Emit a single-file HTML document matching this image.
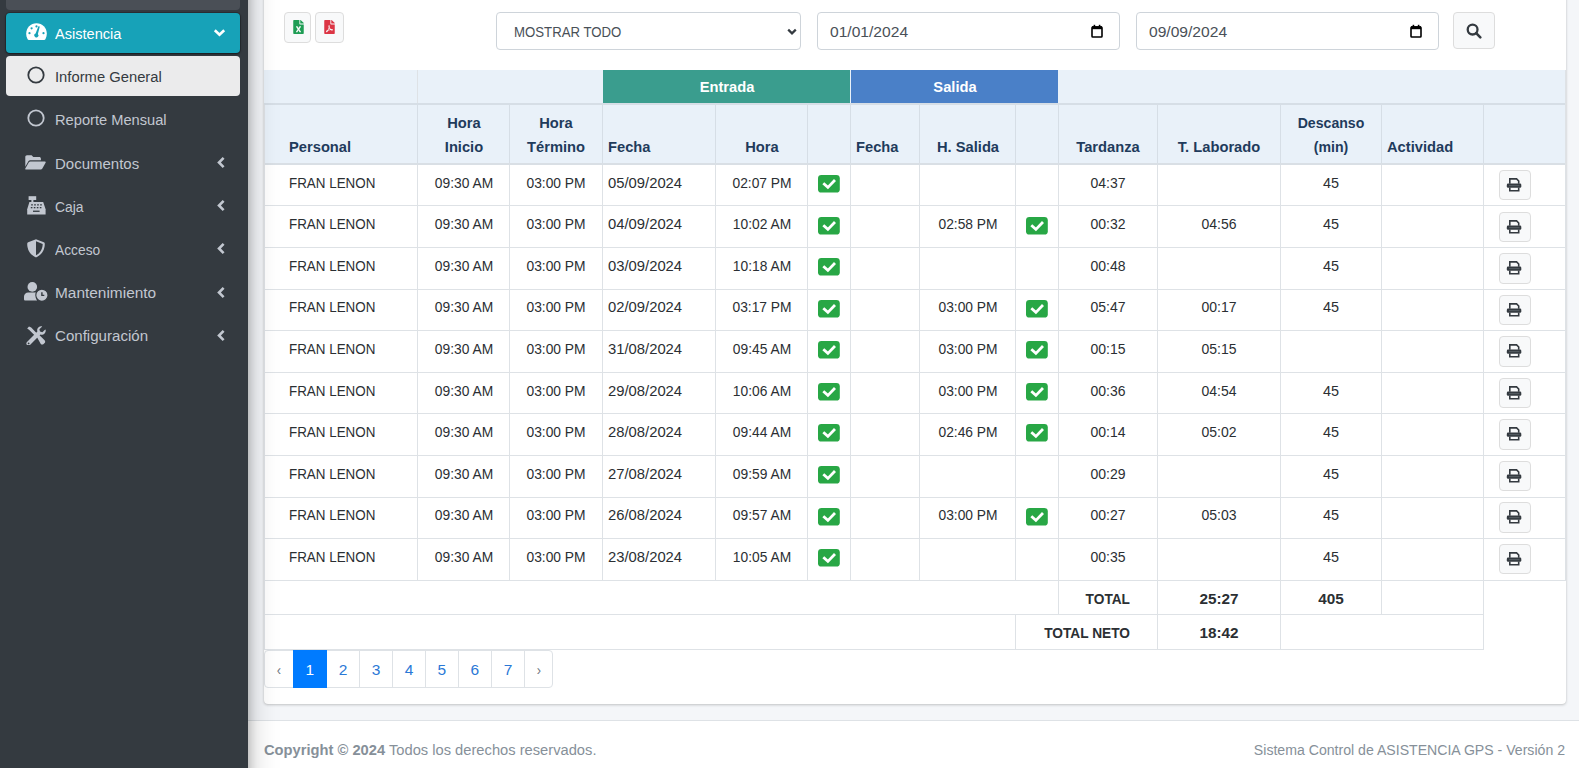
<!DOCTYPE html>
<html><head><meta charset="utf-8"><style>
html,body{margin:0;padding:0;}
body{width:1579px;height:768px;overflow:hidden;position:relative;background:#f4f6f9;font-family:"Liberation Sans", sans-serif;}
.t{position:absolute;white-space:nowrap;}
.r{position:absolute;}
</style></head><body>
<div class="r" style="left:248.00px;top:720.00px;width:1331.00px;height:80.00px;background:#fff;border-top:1px solid #dee2e6;"></div>
<div class="t" style="left:264.00px;top:741.93px;font-size:15.5px;line-height:15.5px;color:#869099;font-weight:normal;transform:scaleX(0.9484);transform-origin:left top;"><b>Copyright &copy; 2024</b> Todos los derechos reservados.</div>
<div class="t" style="left:965.00px;width:600px;text-align:right;top:741.93px;font-size:15.5px;line-height:15.5px;color:#869099;font-weight:normal;transform:scaleX(0.9097);transform-origin:right top;">Sistema Control de ASISTENCIA GPS - Versi&oacute;n 2</div>
<div class="r" style="left:264.00px;top:-20.00px;width:1302.00px;height:724.30px;background:#fff;border-radius:4px;box-shadow:0 0 1px rgba(0,0,0,.125),0 1px 3px rgba(0,0,0,.2);"></div>
<div class="r" style="left:284.20px;top:12.20px;width:27.30px;height:30.40px;box-sizing:border-box;background:#f8f9fa;border:1px solid #ddd;border-radius:4px;"><svg style="position:absolute;left:7.5px;top:6.5px" width="11" height="14" viewBox="0 0 384 512"><path fill="#1f9d55" d="M224 136V0H24C10.7 0 0 10.7 0 24v464c0 13.3 10.7 24 24 24h336c13.3 0 24-10.7 24-24V160H248c-13.2 0-24-10.8-24-24zm60.1 106.5L224 336l60.1 93.5c5.1 8-.6 18.5-10.1 18.5h-34.9c-4.4 0-8.5-2.4-10.6-6.3C208.9 405.5 192 373 192 373c-6.4 14.8-10 20-36.6 68.8-2.1 3.9-6.1 6.3-10.5 6.3H110c-9.5 0-15.2-10.5-10.1-18.5l60.3-93.5-60.3-93.5c-5.2-8 .6-18.5 10.1-18.5h34.8c4.4 0 8.5 2.4 10.6 6.3 26.1 48.8 20 33.6 36.6 68.5 0 0 6.1-11.7 36.6-68.5 2.1-3.9 6.2-6.3 10.6-6.3H274c9.5-.1 15.2 10.4 10.1 18.4zM384 121.9v6.1H256V0h6.1c6.4 0 12.5 2.5 17 7l97.9 98c4.5 4.5 7 10.6 7 16.9z"/></svg></div>
<div class="r" style="left:315.20px;top:12.20px;width:28.40px;height:30.40px;box-sizing:border-box;background:#f8f9fa;border:1px solid #ddd;border-radius:4px;"><svg style="position:absolute;left:8px;top:6.5px" width="11" height="14" viewBox="0 0 384 512"><path fill="#dc3545" d="M181.9 256.1c-5-16-4.9-46.9-2-46.9 8.4 0 7.6 36.9 2 46.9zm-1.7 47.2c-7.7 20.2-17.3 43.3-28.4 62.7 18.3-7 39-17.2 62.9-21.9-12.7-9.6-24.9-23.4-34.5-40.8zM86.1 428.1c0 .8 13.2-5.4 34.9-40.2-6.7 6.3-29.1 24.5-34.9 40.2zM248 160h136v328c0 13.3-10.7 24-24 24H24c-13.3 0-24-10.7-24-24V24C0 10.7 10.7 0 24 0h200v136c0 13.2 10.8 24 24 24zm-8 171.8c-20-12.2-33.3-29-42.7-53.8 4.5-18.5 11.6-46.6 6.2-64.2-4.7-29.4-42.4-26.5-47.8-6.8-5 18.3-.4 44.1 8.1 77-11.6 27.6-28.7 64.6-40.8 85.8-.1 0-.1.1-.2.1-27.1 13.9-73.6 44.5-54.5 68 5.6 6.9 16 10 21.5 10 17.9 0 35.7-18 61.1-61.8 25.8-8.5 54.1-19.1 79-23.2 21.7 11.8 47.1 19.5 64 19.5 29.2 0 31.2-32 19.7-43.4-13.9-13.6-54.3-9.7-73.6-7.2zM377 105L279 7c-4.5-4.5-10.6-7-17-7h-6v128h128v-6.1c0-6.3-2.5-12.4-7-16.9zm-74.1 255.3c4.1-2.7-2.5-11.9-42.8-9 37.1 15.8 42.8 9 42.8 9z"/></svg></div>
<div class="r" style="left:496.00px;top:12.3px;width:305.00px;height:37.5px;box-sizing:border-box;background:#fff;border:1px solid #ced4da;border-radius:4px;"></div>
<div class="t" style="left:513.50px;top:23.73px;font-size:15.5px;line-height:15.5px;color:#495057;font-weight:normal;transform:scaleX(0.8516);transform-origin:left top;">MOSTRAR TODO</div>
<svg class="r" style="left:786.5px;top:27.5px" width="10" height="8" viewBox="0 0 10 8"><path d="M1.2 1.6 L5 5.4 L8.8 1.6" fill="none" stroke="#343a40" stroke-width="2.2"/></svg>
<div class="r" style="left:816.50px;top:12.3px;width:303.50px;height:37.5px;box-sizing:border-box;background:#fff;border:1px solid #ced4da;border-radius:4px;"></div>
<div class="t" style="left:829.50px;top:23.73px;font-size:15.5px;line-height:15.5px;color:#495057;font-weight:normal;transform:scaleX(1.0065);transform-origin:left top;">01/01/2024</div>
<svg class="r" style="left:1091.00px;top:23.5px" width="12" height="14" viewBox="0 0 12 14"><rect x="1" y="3" width="10" height="10" fill="none" stroke="#000" stroke-width="1.6" rx="0.8"/><rect x="1" y="2.2" width="10" height="3" fill="#000"/><rect x="2.6" y="0.8" width="1.6" height="2.5" fill="#000"/><rect x="7.8" y="0.8" width="1.6" height="2.5" fill="#000"/></svg>
<div class="r" style="left:1135.50px;top:12.3px;width:303.50px;height:37.5px;box-sizing:border-box;background:#fff;border:1px solid #ced4da;border-radius:4px;"></div>
<div class="t" style="left:1149.00px;top:23.73px;font-size:15.5px;line-height:15.5px;color:#495057;font-weight:normal;transform:scaleX(1.0065);transform-origin:left top;">09/09/2024</div>
<svg class="r" style="left:1410.00px;top:23.5px" width="12" height="14" viewBox="0 0 12 14"><rect x="1" y="3" width="10" height="10" fill="none" stroke="#000" stroke-width="1.6" rx="0.8"/><rect x="1" y="2.2" width="10" height="3" fill="#000"/><rect x="2.6" y="0.8" width="1.6" height="2.5" fill="#000"/><rect x="7.8" y="0.8" width="1.6" height="2.5" fill="#000"/></svg>
<div class="r" style="left:1453.30px;top:12.00px;width:41.40px;height:37.30px;box-sizing:border-box;background:#f8f9fa;border:1px solid #ddd;border-radius:4px;"><svg style="position:absolute;left:11.8px;top:9.6px" width="16" height="16" viewBox="0 0 16 16"><circle cx="6.6" cy="6.6" r="4.9" fill="none" stroke="#343a40" stroke-width="2.3"/><path d="M10.2 10.2 L14.3 14.3" stroke="#343a40" stroke-width="2.6" stroke-linecap="round"/></svg></div>
<div class="r" style="left:264.00px;top:70.00px;width:1302.00px;height:93.00px;background:#e9f1f9;"></div>
<div class="r" style="left:602.80px;top:70.00px;width:247.20px;height:32.60px;background:#3a9d8e;"></div>
<div class="r" style="left:851.00px;top:70.00px;width:207.20px;height:32.60px;background:#4a80c8;"></div>
<div class="r" style="left:264.00px;top:102.80px;width:1302.00px;height:2.00px;background:#d6dee6;"></div>
<div class="r" style="left:417.00px;top:70.00px;width:1.00px;height:33.00px;background:#dee2e6;"></div>
<div class="r" style="left:264.00px;top:163.00px;width:1302.00px;height:2.00px;background:#d9dfe5;"></div>
<div class="r" style="left:417.00px;top:104.80px;width:1.00px;height:58.20px;background:#d6dee6;"></div>
<div class="r" style="left:417.00px;top:165.00px;width:1.00px;height:415.60px;background:#dee2e6;"></div>
<div class="r" style="left:509.00px;top:104.80px;width:1.00px;height:58.20px;background:#d6dee6;"></div>
<div class="r" style="left:509.00px;top:165.00px;width:1.00px;height:415.60px;background:#dee2e6;"></div>
<div class="r" style="left:601.80px;top:104.80px;width:1.00px;height:58.20px;background:#d6dee6;"></div>
<div class="r" style="left:601.80px;top:165.00px;width:1.00px;height:415.60px;background:#dee2e6;"></div>
<div class="r" style="left:715.00px;top:104.80px;width:1.00px;height:58.20px;background:#d6dee6;"></div>
<div class="r" style="left:715.00px;top:165.00px;width:1.00px;height:415.60px;background:#dee2e6;"></div>
<div class="r" style="left:807.00px;top:104.80px;width:1.00px;height:58.20px;background:#d6dee6;"></div>
<div class="r" style="left:807.00px;top:165.00px;width:1.00px;height:415.60px;background:#dee2e6;"></div>
<div class="r" style="left:849.80px;top:104.80px;width:1.00px;height:58.20px;background:#d6dee6;"></div>
<div class="r" style="left:849.80px;top:165.00px;width:1.00px;height:415.60px;background:#dee2e6;"></div>
<div class="r" style="left:919.00px;top:104.80px;width:1.00px;height:58.20px;background:#d6dee6;"></div>
<div class="r" style="left:919.00px;top:165.00px;width:1.00px;height:415.60px;background:#dee2e6;"></div>
<div class="r" style="left:1015.00px;top:104.80px;width:1.00px;height:58.20px;background:#d6dee6;"></div>
<div class="r" style="left:1015.00px;top:165.00px;width:1.00px;height:415.60px;background:#dee2e6;"></div>
<div class="r" style="left:1058.00px;top:104.80px;width:1.00px;height:58.20px;background:#d6dee6;"></div>
<div class="r" style="left:1058.00px;top:165.00px;width:1.00px;height:415.60px;background:#dee2e6;"></div>
<div class="r" style="left:1157.00px;top:104.80px;width:1.00px;height:58.20px;background:#d6dee6;"></div>
<div class="r" style="left:1157.00px;top:165.00px;width:1.00px;height:415.60px;background:#dee2e6;"></div>
<div class="r" style="left:1280.00px;top:104.80px;width:1.00px;height:58.20px;background:#d6dee6;"></div>
<div class="r" style="left:1280.00px;top:165.00px;width:1.00px;height:415.60px;background:#dee2e6;"></div>
<div class="r" style="left:1381.00px;top:104.80px;width:1.00px;height:58.20px;background:#d6dee6;"></div>
<div class="r" style="left:1381.00px;top:165.00px;width:1.00px;height:415.60px;background:#dee2e6;"></div>
<div class="r" style="left:1483.00px;top:104.80px;width:1.00px;height:58.20px;background:#d6dee6;"></div>
<div class="r" style="left:1483.00px;top:165.00px;width:1.00px;height:415.60px;background:#dee2e6;"></div>
<div class="r" style="left:264.00px;top:104.80px;width:1.00px;height:476.20px;background:#dee2e6;"></div>
<div class="r" style="left:1565.00px;top:70.00px;width:1.00px;height:511.00px;background:#dee2e6;"></div>
<div class="r" style="left:264.00px;top:205.00px;width:1302.00px;height:1.00px;background:#dee2e6;"></div>
<div class="r" style="left:264.00px;top:247.00px;width:1302.00px;height:1.00px;background:#dee2e6;"></div>
<div class="r" style="left:264.00px;top:289.00px;width:1302.00px;height:1.00px;background:#dee2e6;"></div>
<div class="r" style="left:264.00px;top:330.00px;width:1302.00px;height:1.00px;background:#dee2e6;"></div>
<div class="r" style="left:264.00px;top:372.00px;width:1302.00px;height:1.00px;background:#dee2e6;"></div>
<div class="r" style="left:264.00px;top:413.00px;width:1302.00px;height:1.00px;background:#dee2e6;"></div>
<div class="r" style="left:264.00px;top:455.00px;width:1302.00px;height:1.00px;background:#dee2e6;"></div>
<div class="r" style="left:264.00px;top:497.00px;width:1302.00px;height:1.00px;background:#dee2e6;"></div>
<div class="r" style="left:264.00px;top:538.00px;width:1302.00px;height:1.00px;background:#dee2e6;"></div>
<div class="r" style="left:264.00px;top:580.00px;width:1302.00px;height:1.00px;background:#dee2e6;"></div>
<div class="t" style="left:289.00px;top:138.82px;font-size:15.5px;line-height:15.5px;color:#1f3b5c;font-weight:bold;transform:scaleX(0.9484);transform-origin:left top;">Personal</div>
<div class="t" style="left:413.50px;width:100px;text-align:center;top:114.83px;font-size:15.5px;line-height:15.5px;color:#1f3b5c;font-weight:bold;transform:scaleX(0.9484);transform-origin:center top;">Hora</div>
<div class="t" style="left:413.50px;width:100px;text-align:center;top:138.82px;font-size:15.5px;line-height:15.5px;color:#1f3b5c;font-weight:bold;transform:scaleX(0.9484);transform-origin:center top;">Inicio</div>
<div class="t" style="left:506.00px;width:100px;text-align:center;top:114.83px;font-size:15.5px;line-height:15.5px;color:#1f3b5c;font-weight:bold;transform:scaleX(0.9484);transform-origin:center top;">Hora</div>
<div class="t" style="left:506.00px;width:100px;text-align:center;top:138.82px;font-size:15.5px;line-height:15.5px;color:#1f3b5c;font-weight:bold;transform:scaleX(0.9484);transform-origin:center top;">T&eacute;rmino</div>
<div class="t" style="left:608.00px;top:138.82px;font-size:15.5px;line-height:15.5px;color:#1f3b5c;font-weight:bold;transform:scaleX(0.9484);transform-origin:left top;">Fecha</div>
<div class="t" style="left:711.50px;width:100px;text-align:center;top:138.82px;font-size:15.5px;line-height:15.5px;color:#1f3b5c;font-weight:bold;transform:scaleX(0.9484);transform-origin:center top;">Hora</div>
<div class="t" style="left:856.00px;top:138.82px;font-size:15.5px;line-height:15.5px;color:#1f3b5c;font-weight:bold;transform:scaleX(0.9484);transform-origin:left top;">Fecha</div>
<div class="t" style="left:917.50px;width:100px;text-align:center;top:138.82px;font-size:15.5px;line-height:15.5px;color:#1f3b5c;font-weight:bold;transform:scaleX(0.9484);transform-origin:center top;">H. Salida</div>
<div class="t" style="left:1058.00px;width:100px;text-align:center;top:138.82px;font-size:15.5px;line-height:15.5px;color:#1f3b5c;font-weight:bold;transform:scaleX(0.9484);transform-origin:center top;">Tardanza</div>
<div class="t" style="left:1159.00px;width:120px;text-align:center;top:138.82px;font-size:15.5px;line-height:15.5px;color:#1f3b5c;font-weight:bold;transform:scaleX(0.9484);transform-origin:center top;">T. Laborado</div>
<div class="t" style="left:1281.00px;width:100px;text-align:center;top:114.83px;font-size:15.5px;line-height:15.5px;color:#1f3b5c;font-weight:bold;transform:scaleX(0.9097);transform-origin:center top;">Descanso</div>
<div class="t" style="left:1281.00px;width:100px;text-align:center;top:138.82px;font-size:15.5px;line-height:15.5px;color:#1f3b5c;font-weight:bold;transform:scaleX(0.9097);transform-origin:center top;">(min)</div>
<div class="t" style="left:1387.00px;top:138.82px;font-size:15.5px;line-height:15.5px;color:#1f3b5c;font-weight:bold;transform:scaleX(0.9484);transform-origin:left top;">Actividad</div>
<div class="t" style="left:626.50px;width:200px;text-align:center;top:78.83px;font-size:15.5px;line-height:15.5px;color:#fff;font-weight:bold;transform:scaleX(0.9484);transform-origin:center top;">Entrada</div>
<div class="t" style="left:854.50px;width:200px;text-align:center;top:78.83px;font-size:15.5px;line-height:15.5px;color:#fff;font-weight:bold;transform:scaleX(0.9484);transform-origin:center top;">Salida</div>
<div class="t" style="left:289.00px;top:174.72px;font-size:15.5px;line-height:15.5px;color:#2b2f33;font-weight:normal;transform:scaleX(0.8645);transform-origin:left top;">FRAN LENON</div>
<div class="t" style="left:413.50px;width:100px;text-align:center;top:174.72px;font-size:15.5px;line-height:15.5px;color:#2b2f33;font-weight:normal;transform:scaleX(0.8903);transform-origin:center top;">09:30 AM</div>
<div class="t" style="left:506.00px;width:100px;text-align:center;top:174.72px;font-size:15.5px;line-height:15.5px;color:#2b2f33;font-weight:normal;transform:scaleX(0.8903);transform-origin:center top;">03:00 PM</div>
<div class="t" style="left:608.00px;top:174.72px;font-size:15.5px;line-height:15.5px;color:#2b2f33;font-weight:normal;transform:scaleX(0.9548);transform-origin:left top;">05/09/2024</div>
<div class="t" style="left:711.50px;width:100px;text-align:center;top:174.72px;font-size:15.5px;line-height:15.5px;color:#2b2f33;font-weight:normal;transform:scaleX(0.8903);transform-origin:center top;">02:07 PM</div>
<svg class="r" style="left:818.10px;top:175.10px" width="22" height="18" viewBox="0 0 22 18"><rect x="0" y="0" width="21.8" height="17.6" rx="3.4" fill="#28a745"/><path d="M5.3 8.3 L9.9 12.4 L17 5.1" fill="none" stroke="#fff" stroke-width="2.8" stroke-linecap="butt"/></svg>
<div class="t" style="left:1058.00px;width:100px;text-align:center;top:174.72px;font-size:15.5px;line-height:15.5px;color:#2b2f33;font-weight:normal;transform:scaleX(0.9032);transform-origin:center top;">04:37</div>
<div class="t" style="left:1281.00px;width:100px;text-align:center;top:174.72px;font-size:15.5px;line-height:15.5px;color:#2b2f33;font-weight:normal;transform:scaleX(0.9290);transform-origin:center top;">45</div>
<div class="r" style="left:1499.30px;top:170.00px;width:31.30px;height:30.40px;box-sizing:border-box;background:#f8f9fa;border:1px solid #ddd;border-radius:4px;"><svg style="position:absolute;left:0;top:0" width="30" height="29" viewBox="0 0 30 29"><path d="M9.8 12.8 V7.9 H16.6 L18.7 10 V12.8" fill="none" stroke="#343a40" stroke-width="1.6"/><rect x="6.8" y="12.6" width="14.5" height="4.1" rx="1.3" fill="#343a40"/><path d="M9.8 16.5 V19.7 H18.7 V16.5" fill="none" stroke="#343a40" stroke-width="1.6"/><rect x="9" y="14.2" width="10.5" height="0.9" fill="#5a6168"/></svg></div>
<div class="t" style="left:289.00px;top:216.28px;font-size:15.5px;line-height:15.5px;color:#2b2f33;font-weight:normal;transform:scaleX(0.8645);transform-origin:left top;">FRAN LENON</div>
<div class="t" style="left:413.50px;width:100px;text-align:center;top:216.28px;font-size:15.5px;line-height:15.5px;color:#2b2f33;font-weight:normal;transform:scaleX(0.8903);transform-origin:center top;">09:30 AM</div>
<div class="t" style="left:506.00px;width:100px;text-align:center;top:216.28px;font-size:15.5px;line-height:15.5px;color:#2b2f33;font-weight:normal;transform:scaleX(0.8903);transform-origin:center top;">03:00 PM</div>
<div class="t" style="left:608.00px;top:216.28px;font-size:15.5px;line-height:15.5px;color:#2b2f33;font-weight:normal;transform:scaleX(0.9548);transform-origin:left top;">04/09/2024</div>
<div class="t" style="left:711.50px;width:100px;text-align:center;top:216.28px;font-size:15.5px;line-height:15.5px;color:#2b2f33;font-weight:normal;transform:scaleX(0.8903);transform-origin:center top;">10:02 AM</div>
<svg class="r" style="left:818.10px;top:216.66px" width="22" height="18" viewBox="0 0 22 18"><rect x="0" y="0" width="21.8" height="17.6" rx="3.4" fill="#28a745"/><path d="M5.3 8.3 L9.9 12.4 L17 5.1" fill="none" stroke="#fff" stroke-width="2.8" stroke-linecap="butt"/></svg>
<div class="t" style="left:917.50px;width:100px;text-align:center;top:216.28px;font-size:15.5px;line-height:15.5px;color:#2b2f33;font-weight:normal;transform:scaleX(0.8903);transform-origin:center top;">02:58 PM</div>
<svg class="r" style="left:1026.10px;top:216.66px" width="22" height="18" viewBox="0 0 22 18"><rect x="0" y="0" width="21.8" height="17.6" rx="3.4" fill="#28a745"/><path d="M5.3 8.3 L9.9 12.4 L17 5.1" fill="none" stroke="#fff" stroke-width="2.8" stroke-linecap="butt"/></svg>
<div class="t" style="left:1058.00px;width:100px;text-align:center;top:216.28px;font-size:15.5px;line-height:15.5px;color:#2b2f33;font-weight:normal;transform:scaleX(0.9032);transform-origin:center top;">00:32</div>
<div class="t" style="left:1169.00px;width:100px;text-align:center;top:216.28px;font-size:15.5px;line-height:15.5px;color:#2b2f33;font-weight:normal;transform:scaleX(0.9032);transform-origin:center top;">04:56</div>
<div class="t" style="left:1281.00px;width:100px;text-align:center;top:216.28px;font-size:15.5px;line-height:15.5px;color:#2b2f33;font-weight:normal;transform:scaleX(0.9290);transform-origin:center top;">45</div>
<div class="r" style="left:1499.30px;top:211.56px;width:31.30px;height:30.40px;box-sizing:border-box;background:#f8f9fa;border:1px solid #ddd;border-radius:4px;"><svg style="position:absolute;left:0;top:0" width="30" height="29" viewBox="0 0 30 29"><path d="M9.8 12.8 V7.9 H16.6 L18.7 10 V12.8" fill="none" stroke="#343a40" stroke-width="1.6"/><rect x="6.8" y="12.6" width="14.5" height="4.1" rx="1.3" fill="#343a40"/><path d="M9.8 16.5 V19.7 H18.7 V16.5" fill="none" stroke="#343a40" stroke-width="1.6"/><rect x="9" y="14.2" width="10.5" height="0.9" fill="#5a6168"/></svg></div>
<div class="t" style="left:289.00px;top:257.84px;font-size:15.5px;line-height:15.5px;color:#2b2f33;font-weight:normal;transform:scaleX(0.8645);transform-origin:left top;">FRAN LENON</div>
<div class="t" style="left:413.50px;width:100px;text-align:center;top:257.84px;font-size:15.5px;line-height:15.5px;color:#2b2f33;font-weight:normal;transform:scaleX(0.8903);transform-origin:center top;">09:30 AM</div>
<div class="t" style="left:506.00px;width:100px;text-align:center;top:257.84px;font-size:15.5px;line-height:15.5px;color:#2b2f33;font-weight:normal;transform:scaleX(0.8903);transform-origin:center top;">03:00 PM</div>
<div class="t" style="left:608.00px;top:257.84px;font-size:15.5px;line-height:15.5px;color:#2b2f33;font-weight:normal;transform:scaleX(0.9548);transform-origin:left top;">03/09/2024</div>
<div class="t" style="left:711.50px;width:100px;text-align:center;top:257.84px;font-size:15.5px;line-height:15.5px;color:#2b2f33;font-weight:normal;transform:scaleX(0.8903);transform-origin:center top;">10:18 AM</div>
<svg class="r" style="left:818.10px;top:258.22px" width="22" height="18" viewBox="0 0 22 18"><rect x="0" y="0" width="21.8" height="17.6" rx="3.4" fill="#28a745"/><path d="M5.3 8.3 L9.9 12.4 L17 5.1" fill="none" stroke="#fff" stroke-width="2.8" stroke-linecap="butt"/></svg>
<div class="t" style="left:1058.00px;width:100px;text-align:center;top:257.84px;font-size:15.5px;line-height:15.5px;color:#2b2f33;font-weight:normal;transform:scaleX(0.9032);transform-origin:center top;">00:48</div>
<div class="t" style="left:1281.00px;width:100px;text-align:center;top:257.84px;font-size:15.5px;line-height:15.5px;color:#2b2f33;font-weight:normal;transform:scaleX(0.9290);transform-origin:center top;">45</div>
<div class="r" style="left:1499.30px;top:253.12px;width:31.30px;height:30.40px;box-sizing:border-box;background:#f8f9fa;border:1px solid #ddd;border-radius:4px;"><svg style="position:absolute;left:0;top:0" width="30" height="29" viewBox="0 0 30 29"><path d="M9.8 12.8 V7.9 H16.6 L18.7 10 V12.8" fill="none" stroke="#343a40" stroke-width="1.6"/><rect x="6.8" y="12.6" width="14.5" height="4.1" rx="1.3" fill="#343a40"/><path d="M9.8 16.5 V19.7 H18.7 V16.5" fill="none" stroke="#343a40" stroke-width="1.6"/><rect x="9" y="14.2" width="10.5" height="0.9" fill="#5a6168"/></svg></div>
<div class="t" style="left:289.00px;top:299.41px;font-size:15.5px;line-height:15.5px;color:#2b2f33;font-weight:normal;transform:scaleX(0.8645);transform-origin:left top;">FRAN LENON</div>
<div class="t" style="left:413.50px;width:100px;text-align:center;top:299.41px;font-size:15.5px;line-height:15.5px;color:#2b2f33;font-weight:normal;transform:scaleX(0.8903);transform-origin:center top;">09:30 AM</div>
<div class="t" style="left:506.00px;width:100px;text-align:center;top:299.41px;font-size:15.5px;line-height:15.5px;color:#2b2f33;font-weight:normal;transform:scaleX(0.8903);transform-origin:center top;">03:00 PM</div>
<div class="t" style="left:608.00px;top:299.41px;font-size:15.5px;line-height:15.5px;color:#2b2f33;font-weight:normal;transform:scaleX(0.9548);transform-origin:left top;">02/09/2024</div>
<div class="t" style="left:711.50px;width:100px;text-align:center;top:299.41px;font-size:15.5px;line-height:15.5px;color:#2b2f33;font-weight:normal;transform:scaleX(0.8903);transform-origin:center top;">03:17 PM</div>
<svg class="r" style="left:818.10px;top:299.78px" width="22" height="18" viewBox="0 0 22 18"><rect x="0" y="0" width="21.8" height="17.6" rx="3.4" fill="#28a745"/><path d="M5.3 8.3 L9.9 12.4 L17 5.1" fill="none" stroke="#fff" stroke-width="2.8" stroke-linecap="butt"/></svg>
<div class="t" style="left:917.50px;width:100px;text-align:center;top:299.41px;font-size:15.5px;line-height:15.5px;color:#2b2f33;font-weight:normal;transform:scaleX(0.8903);transform-origin:center top;">03:00 PM</div>
<svg class="r" style="left:1026.10px;top:299.78px" width="22" height="18" viewBox="0 0 22 18"><rect x="0" y="0" width="21.8" height="17.6" rx="3.4" fill="#28a745"/><path d="M5.3 8.3 L9.9 12.4 L17 5.1" fill="none" stroke="#fff" stroke-width="2.8" stroke-linecap="butt"/></svg>
<div class="t" style="left:1058.00px;width:100px;text-align:center;top:299.41px;font-size:15.5px;line-height:15.5px;color:#2b2f33;font-weight:normal;transform:scaleX(0.9032);transform-origin:center top;">05:47</div>
<div class="t" style="left:1169.00px;width:100px;text-align:center;top:299.41px;font-size:15.5px;line-height:15.5px;color:#2b2f33;font-weight:normal;transform:scaleX(0.9032);transform-origin:center top;">00:17</div>
<div class="t" style="left:1281.00px;width:100px;text-align:center;top:299.41px;font-size:15.5px;line-height:15.5px;color:#2b2f33;font-weight:normal;transform:scaleX(0.9290);transform-origin:center top;">45</div>
<div class="r" style="left:1499.30px;top:294.68px;width:31.30px;height:30.40px;box-sizing:border-box;background:#f8f9fa;border:1px solid #ddd;border-radius:4px;"><svg style="position:absolute;left:0;top:0" width="30" height="29" viewBox="0 0 30 29"><path d="M9.8 12.8 V7.9 H16.6 L18.7 10 V12.8" fill="none" stroke="#343a40" stroke-width="1.6"/><rect x="6.8" y="12.6" width="14.5" height="4.1" rx="1.3" fill="#343a40"/><path d="M9.8 16.5 V19.7 H18.7 V16.5" fill="none" stroke="#343a40" stroke-width="1.6"/><rect x="9" y="14.2" width="10.5" height="0.9" fill="#5a6168"/></svg></div>
<div class="t" style="left:289.00px;top:340.96px;font-size:15.5px;line-height:15.5px;color:#2b2f33;font-weight:normal;transform:scaleX(0.8645);transform-origin:left top;">FRAN LENON</div>
<div class="t" style="left:413.50px;width:100px;text-align:center;top:340.96px;font-size:15.5px;line-height:15.5px;color:#2b2f33;font-weight:normal;transform:scaleX(0.8903);transform-origin:center top;">09:30 AM</div>
<div class="t" style="left:506.00px;width:100px;text-align:center;top:340.96px;font-size:15.5px;line-height:15.5px;color:#2b2f33;font-weight:normal;transform:scaleX(0.8903);transform-origin:center top;">03:00 PM</div>
<div class="t" style="left:608.00px;top:340.96px;font-size:15.5px;line-height:15.5px;color:#2b2f33;font-weight:normal;transform:scaleX(0.9548);transform-origin:left top;">31/08/2024</div>
<div class="t" style="left:711.50px;width:100px;text-align:center;top:340.96px;font-size:15.5px;line-height:15.5px;color:#2b2f33;font-weight:normal;transform:scaleX(0.8903);transform-origin:center top;">09:45 AM</div>
<svg class="r" style="left:818.10px;top:341.34px" width="22" height="18" viewBox="0 0 22 18"><rect x="0" y="0" width="21.8" height="17.6" rx="3.4" fill="#28a745"/><path d="M5.3 8.3 L9.9 12.4 L17 5.1" fill="none" stroke="#fff" stroke-width="2.8" stroke-linecap="butt"/></svg>
<div class="t" style="left:917.50px;width:100px;text-align:center;top:340.96px;font-size:15.5px;line-height:15.5px;color:#2b2f33;font-weight:normal;transform:scaleX(0.8903);transform-origin:center top;">03:00 PM</div>
<svg class="r" style="left:1026.10px;top:341.34px" width="22" height="18" viewBox="0 0 22 18"><rect x="0" y="0" width="21.8" height="17.6" rx="3.4" fill="#28a745"/><path d="M5.3 8.3 L9.9 12.4 L17 5.1" fill="none" stroke="#fff" stroke-width="2.8" stroke-linecap="butt"/></svg>
<div class="t" style="left:1058.00px;width:100px;text-align:center;top:340.96px;font-size:15.5px;line-height:15.5px;color:#2b2f33;font-weight:normal;transform:scaleX(0.9032);transform-origin:center top;">00:15</div>
<div class="t" style="left:1169.00px;width:100px;text-align:center;top:340.96px;font-size:15.5px;line-height:15.5px;color:#2b2f33;font-weight:normal;transform:scaleX(0.9032);transform-origin:center top;">05:15</div>
<div class="r" style="left:1499.30px;top:336.24px;width:31.30px;height:30.40px;box-sizing:border-box;background:#f8f9fa;border:1px solid #ddd;border-radius:4px;"><svg style="position:absolute;left:0;top:0" width="30" height="29" viewBox="0 0 30 29"><path d="M9.8 12.8 V7.9 H16.6 L18.7 10 V12.8" fill="none" stroke="#343a40" stroke-width="1.6"/><rect x="6.8" y="12.6" width="14.5" height="4.1" rx="1.3" fill="#343a40"/><path d="M9.8 16.5 V19.7 H18.7 V16.5" fill="none" stroke="#343a40" stroke-width="1.6"/><rect x="9" y="14.2" width="10.5" height="0.9" fill="#5a6168"/></svg></div>
<div class="t" style="left:289.00px;top:382.53px;font-size:15.5px;line-height:15.5px;color:#2b2f33;font-weight:normal;transform:scaleX(0.8645);transform-origin:left top;">FRAN LENON</div>
<div class="t" style="left:413.50px;width:100px;text-align:center;top:382.53px;font-size:15.5px;line-height:15.5px;color:#2b2f33;font-weight:normal;transform:scaleX(0.8903);transform-origin:center top;">09:30 AM</div>
<div class="t" style="left:506.00px;width:100px;text-align:center;top:382.53px;font-size:15.5px;line-height:15.5px;color:#2b2f33;font-weight:normal;transform:scaleX(0.8903);transform-origin:center top;">03:00 PM</div>
<div class="t" style="left:608.00px;top:382.53px;font-size:15.5px;line-height:15.5px;color:#2b2f33;font-weight:normal;transform:scaleX(0.9548);transform-origin:left top;">29/08/2024</div>
<div class="t" style="left:711.50px;width:100px;text-align:center;top:382.53px;font-size:15.5px;line-height:15.5px;color:#2b2f33;font-weight:normal;transform:scaleX(0.8903);transform-origin:center top;">10:06 AM</div>
<svg class="r" style="left:818.10px;top:382.90px" width="22" height="18" viewBox="0 0 22 18"><rect x="0" y="0" width="21.8" height="17.6" rx="3.4" fill="#28a745"/><path d="M5.3 8.3 L9.9 12.4 L17 5.1" fill="none" stroke="#fff" stroke-width="2.8" stroke-linecap="butt"/></svg>
<div class="t" style="left:917.50px;width:100px;text-align:center;top:382.53px;font-size:15.5px;line-height:15.5px;color:#2b2f33;font-weight:normal;transform:scaleX(0.8903);transform-origin:center top;">03:00 PM</div>
<svg class="r" style="left:1026.10px;top:382.90px" width="22" height="18" viewBox="0 0 22 18"><rect x="0" y="0" width="21.8" height="17.6" rx="3.4" fill="#28a745"/><path d="M5.3 8.3 L9.9 12.4 L17 5.1" fill="none" stroke="#fff" stroke-width="2.8" stroke-linecap="butt"/></svg>
<div class="t" style="left:1058.00px;width:100px;text-align:center;top:382.53px;font-size:15.5px;line-height:15.5px;color:#2b2f33;font-weight:normal;transform:scaleX(0.9032);transform-origin:center top;">00:36</div>
<div class="t" style="left:1169.00px;width:100px;text-align:center;top:382.53px;font-size:15.5px;line-height:15.5px;color:#2b2f33;font-weight:normal;transform:scaleX(0.9032);transform-origin:center top;">04:54</div>
<div class="t" style="left:1281.00px;width:100px;text-align:center;top:382.53px;font-size:15.5px;line-height:15.5px;color:#2b2f33;font-weight:normal;transform:scaleX(0.9290);transform-origin:center top;">45</div>
<div class="r" style="left:1499.30px;top:377.80px;width:31.30px;height:30.40px;box-sizing:border-box;background:#f8f9fa;border:1px solid #ddd;border-radius:4px;"><svg style="position:absolute;left:0;top:0" width="30" height="29" viewBox="0 0 30 29"><path d="M9.8 12.8 V7.9 H16.6 L18.7 10 V12.8" fill="none" stroke="#343a40" stroke-width="1.6"/><rect x="6.8" y="12.6" width="14.5" height="4.1" rx="1.3" fill="#343a40"/><path d="M9.8 16.5 V19.7 H18.7 V16.5" fill="none" stroke="#343a40" stroke-width="1.6"/><rect x="9" y="14.2" width="10.5" height="0.9" fill="#5a6168"/></svg></div>
<div class="t" style="left:289.00px;top:424.08px;font-size:15.5px;line-height:15.5px;color:#2b2f33;font-weight:normal;transform:scaleX(0.8645);transform-origin:left top;">FRAN LENON</div>
<div class="t" style="left:413.50px;width:100px;text-align:center;top:424.08px;font-size:15.5px;line-height:15.5px;color:#2b2f33;font-weight:normal;transform:scaleX(0.8903);transform-origin:center top;">09:30 AM</div>
<div class="t" style="left:506.00px;width:100px;text-align:center;top:424.08px;font-size:15.5px;line-height:15.5px;color:#2b2f33;font-weight:normal;transform:scaleX(0.8903);transform-origin:center top;">03:00 PM</div>
<div class="t" style="left:608.00px;top:424.08px;font-size:15.5px;line-height:15.5px;color:#2b2f33;font-weight:normal;transform:scaleX(0.9548);transform-origin:left top;">28/08/2024</div>
<div class="t" style="left:711.50px;width:100px;text-align:center;top:424.08px;font-size:15.5px;line-height:15.5px;color:#2b2f33;font-weight:normal;transform:scaleX(0.8903);transform-origin:center top;">09:44 AM</div>
<svg class="r" style="left:818.10px;top:424.46px" width="22" height="18" viewBox="0 0 22 18"><rect x="0" y="0" width="21.8" height="17.6" rx="3.4" fill="#28a745"/><path d="M5.3 8.3 L9.9 12.4 L17 5.1" fill="none" stroke="#fff" stroke-width="2.8" stroke-linecap="butt"/></svg>
<div class="t" style="left:917.50px;width:100px;text-align:center;top:424.08px;font-size:15.5px;line-height:15.5px;color:#2b2f33;font-weight:normal;transform:scaleX(0.8903);transform-origin:center top;">02:46 PM</div>
<svg class="r" style="left:1026.10px;top:424.46px" width="22" height="18" viewBox="0 0 22 18"><rect x="0" y="0" width="21.8" height="17.6" rx="3.4" fill="#28a745"/><path d="M5.3 8.3 L9.9 12.4 L17 5.1" fill="none" stroke="#fff" stroke-width="2.8" stroke-linecap="butt"/></svg>
<div class="t" style="left:1058.00px;width:100px;text-align:center;top:424.08px;font-size:15.5px;line-height:15.5px;color:#2b2f33;font-weight:normal;transform:scaleX(0.9032);transform-origin:center top;">00:14</div>
<div class="t" style="left:1169.00px;width:100px;text-align:center;top:424.08px;font-size:15.5px;line-height:15.5px;color:#2b2f33;font-weight:normal;transform:scaleX(0.9032);transform-origin:center top;">05:02</div>
<div class="t" style="left:1281.00px;width:100px;text-align:center;top:424.08px;font-size:15.5px;line-height:15.5px;color:#2b2f33;font-weight:normal;transform:scaleX(0.9290);transform-origin:center top;">45</div>
<div class="r" style="left:1499.30px;top:419.36px;width:31.30px;height:30.40px;box-sizing:border-box;background:#f8f9fa;border:1px solid #ddd;border-radius:4px;"><svg style="position:absolute;left:0;top:0" width="30" height="29" viewBox="0 0 30 29"><path d="M9.8 12.8 V7.9 H16.6 L18.7 10 V12.8" fill="none" stroke="#343a40" stroke-width="1.6"/><rect x="6.8" y="12.6" width="14.5" height="4.1" rx="1.3" fill="#343a40"/><path d="M9.8 16.5 V19.7 H18.7 V16.5" fill="none" stroke="#343a40" stroke-width="1.6"/><rect x="9" y="14.2" width="10.5" height="0.9" fill="#5a6168"/></svg></div>
<div class="t" style="left:289.00px;top:465.65px;font-size:15.5px;line-height:15.5px;color:#2b2f33;font-weight:normal;transform:scaleX(0.8645);transform-origin:left top;">FRAN LENON</div>
<div class="t" style="left:413.50px;width:100px;text-align:center;top:465.65px;font-size:15.5px;line-height:15.5px;color:#2b2f33;font-weight:normal;transform:scaleX(0.8903);transform-origin:center top;">09:30 AM</div>
<div class="t" style="left:506.00px;width:100px;text-align:center;top:465.65px;font-size:15.5px;line-height:15.5px;color:#2b2f33;font-weight:normal;transform:scaleX(0.8903);transform-origin:center top;">03:00 PM</div>
<div class="t" style="left:608.00px;top:465.65px;font-size:15.5px;line-height:15.5px;color:#2b2f33;font-weight:normal;transform:scaleX(0.9548);transform-origin:left top;">27/08/2024</div>
<div class="t" style="left:711.50px;width:100px;text-align:center;top:465.65px;font-size:15.5px;line-height:15.5px;color:#2b2f33;font-weight:normal;transform:scaleX(0.8903);transform-origin:center top;">09:59 AM</div>
<svg class="r" style="left:818.10px;top:466.02px" width="22" height="18" viewBox="0 0 22 18"><rect x="0" y="0" width="21.8" height="17.6" rx="3.4" fill="#28a745"/><path d="M5.3 8.3 L9.9 12.4 L17 5.1" fill="none" stroke="#fff" stroke-width="2.8" stroke-linecap="butt"/></svg>
<div class="t" style="left:1058.00px;width:100px;text-align:center;top:465.65px;font-size:15.5px;line-height:15.5px;color:#2b2f33;font-weight:normal;transform:scaleX(0.9032);transform-origin:center top;">00:29</div>
<div class="t" style="left:1281.00px;width:100px;text-align:center;top:465.65px;font-size:15.5px;line-height:15.5px;color:#2b2f33;font-weight:normal;transform:scaleX(0.9290);transform-origin:center top;">45</div>
<div class="r" style="left:1499.30px;top:460.92px;width:31.30px;height:30.40px;box-sizing:border-box;background:#f8f9fa;border:1px solid #ddd;border-radius:4px;"><svg style="position:absolute;left:0;top:0" width="30" height="29" viewBox="0 0 30 29"><path d="M9.8 12.8 V7.9 H16.6 L18.7 10 V12.8" fill="none" stroke="#343a40" stroke-width="1.6"/><rect x="6.8" y="12.6" width="14.5" height="4.1" rx="1.3" fill="#343a40"/><path d="M9.8 16.5 V19.7 H18.7 V16.5" fill="none" stroke="#343a40" stroke-width="1.6"/><rect x="9" y="14.2" width="10.5" height="0.9" fill="#5a6168"/></svg></div>
<div class="t" style="left:289.00px;top:507.20px;font-size:15.5px;line-height:15.5px;color:#2b2f33;font-weight:normal;transform:scaleX(0.8645);transform-origin:left top;">FRAN LENON</div>
<div class="t" style="left:413.50px;width:100px;text-align:center;top:507.20px;font-size:15.5px;line-height:15.5px;color:#2b2f33;font-weight:normal;transform:scaleX(0.8903);transform-origin:center top;">09:30 AM</div>
<div class="t" style="left:506.00px;width:100px;text-align:center;top:507.20px;font-size:15.5px;line-height:15.5px;color:#2b2f33;font-weight:normal;transform:scaleX(0.8903);transform-origin:center top;">03:00 PM</div>
<div class="t" style="left:608.00px;top:507.20px;font-size:15.5px;line-height:15.5px;color:#2b2f33;font-weight:normal;transform:scaleX(0.9548);transform-origin:left top;">26/08/2024</div>
<div class="t" style="left:711.50px;width:100px;text-align:center;top:507.20px;font-size:15.5px;line-height:15.5px;color:#2b2f33;font-weight:normal;transform:scaleX(0.8903);transform-origin:center top;">09:57 AM</div>
<svg class="r" style="left:818.10px;top:507.58px" width="22" height="18" viewBox="0 0 22 18"><rect x="0" y="0" width="21.8" height="17.6" rx="3.4" fill="#28a745"/><path d="M5.3 8.3 L9.9 12.4 L17 5.1" fill="none" stroke="#fff" stroke-width="2.8" stroke-linecap="butt"/></svg>
<div class="t" style="left:917.50px;width:100px;text-align:center;top:507.20px;font-size:15.5px;line-height:15.5px;color:#2b2f33;font-weight:normal;transform:scaleX(0.8903);transform-origin:center top;">03:00 PM</div>
<svg class="r" style="left:1026.10px;top:507.58px" width="22" height="18" viewBox="0 0 22 18"><rect x="0" y="0" width="21.8" height="17.6" rx="3.4" fill="#28a745"/><path d="M5.3 8.3 L9.9 12.4 L17 5.1" fill="none" stroke="#fff" stroke-width="2.8" stroke-linecap="butt"/></svg>
<div class="t" style="left:1058.00px;width:100px;text-align:center;top:507.20px;font-size:15.5px;line-height:15.5px;color:#2b2f33;font-weight:normal;transform:scaleX(0.9032);transform-origin:center top;">00:27</div>
<div class="t" style="left:1169.00px;width:100px;text-align:center;top:507.20px;font-size:15.5px;line-height:15.5px;color:#2b2f33;font-weight:normal;transform:scaleX(0.9032);transform-origin:center top;">05:03</div>
<div class="t" style="left:1281.00px;width:100px;text-align:center;top:507.20px;font-size:15.5px;line-height:15.5px;color:#2b2f33;font-weight:normal;transform:scaleX(0.9290);transform-origin:center top;">45</div>
<div class="r" style="left:1499.30px;top:502.48px;width:31.30px;height:30.40px;box-sizing:border-box;background:#f8f9fa;border:1px solid #ddd;border-radius:4px;"><svg style="position:absolute;left:0;top:0" width="30" height="29" viewBox="0 0 30 29"><path d="M9.8 12.8 V7.9 H16.6 L18.7 10 V12.8" fill="none" stroke="#343a40" stroke-width="1.6"/><rect x="6.8" y="12.6" width="14.5" height="4.1" rx="1.3" fill="#343a40"/><path d="M9.8 16.5 V19.7 H18.7 V16.5" fill="none" stroke="#343a40" stroke-width="1.6"/><rect x="9" y="14.2" width="10.5" height="0.9" fill="#5a6168"/></svg></div>
<div class="t" style="left:289.00px;top:548.77px;font-size:15.5px;line-height:15.5px;color:#2b2f33;font-weight:normal;transform:scaleX(0.8645);transform-origin:left top;">FRAN LENON</div>
<div class="t" style="left:413.50px;width:100px;text-align:center;top:548.77px;font-size:15.5px;line-height:15.5px;color:#2b2f33;font-weight:normal;transform:scaleX(0.8903);transform-origin:center top;">09:30 AM</div>
<div class="t" style="left:506.00px;width:100px;text-align:center;top:548.77px;font-size:15.5px;line-height:15.5px;color:#2b2f33;font-weight:normal;transform:scaleX(0.8903);transform-origin:center top;">03:00 PM</div>
<div class="t" style="left:608.00px;top:548.77px;font-size:15.5px;line-height:15.5px;color:#2b2f33;font-weight:normal;transform:scaleX(0.9548);transform-origin:left top;">23/08/2024</div>
<div class="t" style="left:711.50px;width:100px;text-align:center;top:548.77px;font-size:15.5px;line-height:15.5px;color:#2b2f33;font-weight:normal;transform:scaleX(0.8903);transform-origin:center top;">10:05 AM</div>
<svg class="r" style="left:818.10px;top:549.14px" width="22" height="18" viewBox="0 0 22 18"><rect x="0" y="0" width="21.8" height="17.6" rx="3.4" fill="#28a745"/><path d="M5.3 8.3 L9.9 12.4 L17 5.1" fill="none" stroke="#fff" stroke-width="2.8" stroke-linecap="butt"/></svg>
<div class="t" style="left:1058.00px;width:100px;text-align:center;top:548.77px;font-size:15.5px;line-height:15.5px;color:#2b2f33;font-weight:normal;transform:scaleX(0.9032);transform-origin:center top;">00:35</div>
<div class="t" style="left:1281.00px;width:100px;text-align:center;top:548.77px;font-size:15.5px;line-height:15.5px;color:#2b2f33;font-weight:normal;transform:scaleX(0.9290);transform-origin:center top;">45</div>
<div class="r" style="left:1499.30px;top:544.04px;width:31.30px;height:30.40px;box-sizing:border-box;background:#f8f9fa;border:1px solid #ddd;border-radius:4px;"><svg style="position:absolute;left:0;top:0" width="30" height="29" viewBox="0 0 30 29"><path d="M9.8 12.8 V7.9 H16.6 L18.7 10 V12.8" fill="none" stroke="#343a40" stroke-width="1.6"/><rect x="6.8" y="12.6" width="14.5" height="4.1" rx="1.3" fill="#343a40"/><path d="M9.8 16.5 V19.7 H18.7 V16.5" fill="none" stroke="#343a40" stroke-width="1.6"/><rect x="9" y="14.2" width="10.5" height="0.9" fill="#5a6168"/></svg></div>
<div class="r" style="left:1058.00px;top:580.60px;width:1.00px;height:33.80px;background:#dee2e6;"></div>
<div class="r" style="left:1157.00px;top:580.60px;width:1.00px;height:33.80px;background:#dee2e6;"></div>
<div class="r" style="left:1280.00px;top:580.60px;width:1.00px;height:33.80px;background:#dee2e6;"></div>
<div class="r" style="left:1381.00px;top:580.60px;width:1.00px;height:33.80px;background:#dee2e6;"></div>
<div class="r" style="left:1483.00px;top:580.60px;width:1.00px;height:69.00px;background:#dee2e6;"></div>
<div class="r" style="left:264.00px;top:613.60px;width:1220.00px;height:1.00px;background:#dee2e6;"></div>
<div class="r" style="left:1015.00px;top:614.40px;width:1.00px;height:35.10px;background:#dee2e6;"></div>
<div class="r" style="left:1157.00px;top:614.40px;width:1.00px;height:35.10px;background:#dee2e6;"></div>
<div class="r" style="left:1280.00px;top:614.40px;width:1.00px;height:35.10px;background:#dee2e6;"></div>
<div class="r" style="left:264.00px;top:580.40px;width:1.00px;height:69.60px;background:#dee2e6;"></div>
<div class="r" style="left:264.00px;top:648.80px;width:1220.00px;height:1.00px;background:#dee2e6;"></div>
<div class="t" style="left:929.80px;width:200px;text-align:right;top:591.23px;font-size:15.5px;line-height:15.5px;color:#2b2f33;font-weight:bold;transform:scaleX(0.8839);transform-origin:right top;">TOTAL</div>
<div class="t" style="left:1169.00px;width:100px;text-align:center;top:591.23px;font-size:15.5px;line-height:15.5px;color:#2b2f33;font-weight:bold;transform:scaleX(0.9871);transform-origin:center top;">25:27</div>
<div class="t" style="left:1281.00px;width:100px;text-align:center;top:591.23px;font-size:15.5px;line-height:15.5px;color:#2b2f33;font-weight:bold;transform:scaleX(0.9871);transform-origin:center top;">405</div>
<div class="t" style="left:929.80px;width:200px;text-align:right;top:625.43px;font-size:15.5px;line-height:15.5px;color:#2b2f33;font-weight:bold;transform:scaleX(0.8839);transform-origin:right top;">TOTAL NETO</div>
<div class="t" style="left:1169.00px;width:100px;text-align:center;top:625.43px;font-size:15.5px;line-height:15.5px;color:#2b2f33;font-weight:bold;transform:scaleX(0.9871);transform-origin:center top;">18:42</div>
<div class="r" style="left:264px;top:649.6px;width:289.2px;height:38.4px;box-sizing:border-box;border:1px solid #dee2e6;border-radius:4px;background:#fff"></div>
<div class="r" style="left:292.60px;top:649.60px;width:1.00px;height:38.40px;background:#dee2e6;"></div>
<div class="r" style="left:326.20px;top:649.60px;width:1.00px;height:38.40px;background:#dee2e6;"></div>
<div class="r" style="left:359.00px;top:649.60px;width:1.00px;height:38.40px;background:#dee2e6;"></div>
<div class="r" style="left:392.20px;top:649.60px;width:1.00px;height:38.40px;background:#dee2e6;"></div>
<div class="r" style="left:425.00px;top:649.60px;width:1.00px;height:38.40px;background:#dee2e6;"></div>
<div class="r" style="left:457.80px;top:649.60px;width:1.00px;height:38.40px;background:#dee2e6;"></div>
<div class="r" style="left:491.00px;top:649.60px;width:1.00px;height:38.40px;background:#dee2e6;"></div>
<div class="r" style="left:523.90px;top:649.60px;width:1.00px;height:38.40px;background:#dee2e6;"></div>
<div class="r" style="left:293.10px;top:649.60px;width:33.60px;height:38.40px;background:#007bff;"></div>
<div class="t" style="left:263.55px;width:30px;text-align:center;top:661.83px;font-size:15.5px;line-height:15.5px;color:#6c757d;font-weight:normal;transform:scaleX(0.8387);transform-origin:center top;">&lsaquo;</div>
<div class="t" style="left:294.90px;width:30px;text-align:center;top:661.83px;font-size:15.5px;line-height:15.5px;color:#fff;font-weight:normal;transform:scaleX(1.0000);transform-origin:center top;">1</div>
<div class="t" style="left:328.10px;width:30px;text-align:center;top:661.83px;font-size:15.5px;line-height:15.5px;color:#2a78d6;font-weight:normal;transform:scaleX(1.0000);transform-origin:center top;">2</div>
<div class="t" style="left:361.10px;width:30px;text-align:center;top:661.83px;font-size:15.5px;line-height:15.5px;color:#2a78d6;font-weight:normal;transform:scaleX(1.0000);transform-origin:center top;">3</div>
<div class="t" style="left:394.10px;width:30px;text-align:center;top:661.83px;font-size:15.5px;line-height:15.5px;color:#2a78d6;font-weight:normal;transform:scaleX(1.0000);transform-origin:center top;">4</div>
<div class="t" style="left:426.90px;width:30px;text-align:center;top:661.83px;font-size:15.5px;line-height:15.5px;color:#2a78d6;font-weight:normal;transform:scaleX(1.0000);transform-origin:center top;">5</div>
<div class="t" style="left:459.90px;width:30px;text-align:center;top:661.83px;font-size:15.5px;line-height:15.5px;color:#2a78d6;font-weight:normal;transform:scaleX(1.0000);transform-origin:center top;">6</div>
<div class="t" style="left:492.95px;width:30px;text-align:center;top:661.83px;font-size:15.5px;line-height:15.5px;color:#2a78d6;font-weight:normal;transform:scaleX(1.0000);transform-origin:center top;">7</div>
<div class="t" style="left:523.80px;width:30px;text-align:center;top:661.83px;font-size:15.5px;line-height:15.5px;color:#6c757d;font-weight:normal;transform:scaleX(0.8387);transform-origin:center top;">&rsaquo;</div>
<div class="r" style="left:0;top:-100px;width:248px;height:968px;background:#343a40;box-shadow:0 14px 28px rgba(0,0,0,.25),0 10px 10px rgba(0,0,0,.22);"></div>
<div class="r" style="left:6.00px;top:-30.00px;width:234.00px;height:39.80px;background:#4a4f56;border-radius:4px;"></div>
<div class="r" style="left:6.00px;top:12.80px;width:234.00px;height:40.00px;background:#17a2b8;border-radius:4px;box-shadow:0 0 0 1px rgba(0,0,0,.18),0 1px 3px rgba(0,0,0,.2),0 1px 2px rgba(0,0,0,.3);"></div>
<div class="r" style="left:6.00px;top:56.00px;width:234.00px;height:40.00px;background:#ebebec;border-radius:4px;"></div>
<div class="t" style="left:55.00px;top:25.93px;font-size:15.5px;line-height:15.5px;color:#fff;font-weight:normal;transform:scaleX(0.9406);transform-origin:left top;">Asistencia</div>
<div class="t" style="left:55.00px;top:69.13px;font-size:15.5px;line-height:15.5px;color:#343a40;font-weight:normal;transform:scaleX(0.9535);transform-origin:left top;">Informe General</div>
<div class="t" style="left:55.00px;top:112.33px;font-size:15.5px;line-height:15.5px;color:#c2c7d0;font-weight:normal;transform:scaleX(0.9452);transform-origin:left top;">Reporte Mensual</div>
<div class="t" style="left:55.00px;top:155.53px;font-size:15.5px;line-height:15.5px;color:#c2c7d0;font-weight:normal;transform:scaleX(0.9671);transform-origin:left top;">Documentos</div>
<svg class="r" style="left:215.5px;top:155.90px" width="10" height="13" viewBox="0 0 10 13"><path d="M7.6 1.8 L3 6.5 L7.6 11.2" fill="none" stroke="#c2c7d0" stroke-width="2.6"/></svg>
<div class="t" style="left:55.00px;top:198.72px;font-size:15.5px;line-height:15.5px;color:#c2c7d0;font-weight:normal;transform:scaleX(0.8942);transform-origin:left top;">Caja</div>
<svg class="r" style="left:215.5px;top:199.10px" width="10" height="13" viewBox="0 0 10 13"><path d="M7.6 1.8 L3 6.5 L7.6 11.2" fill="none" stroke="#c2c7d0" stroke-width="2.6"/></svg>
<div class="t" style="left:55.00px;top:241.92px;font-size:15.5px;line-height:15.5px;color:#c2c7d0;font-weight:normal;transform:scaleX(0.8890);transform-origin:left top;">Acceso</div>
<svg class="r" style="left:215.5px;top:242.30px" width="10" height="13" viewBox="0 0 10 13"><path d="M7.6 1.8 L3 6.5 L7.6 11.2" fill="none" stroke="#c2c7d0" stroke-width="2.6"/></svg>
<div class="t" style="left:55.00px;top:285.13px;font-size:15.5px;line-height:15.5px;color:#c2c7d0;font-weight:normal;transform:scaleX(0.9948);transform-origin:left top;">Mantenimiento</div>
<svg class="r" style="left:215.5px;top:285.50px" width="10" height="13" viewBox="0 0 10 13"><path d="M7.6 1.8 L3 6.5 L7.6 11.2" fill="none" stroke="#c2c7d0" stroke-width="2.6"/></svg>
<div class="t" style="left:55.00px;top:328.33px;font-size:15.5px;line-height:15.5px;color:#c2c7d0;font-weight:normal;transform:scaleX(0.9729);transform-origin:left top;">Configuraci&oacute;n</div>
<svg class="r" style="left:215.5px;top:328.70px" width="10" height="13" viewBox="0 0 10 13"><path d="M7.6 1.8 L3 6.5 L7.6 11.2" fill="none" stroke="#c2c7d0" stroke-width="2.6"/></svg>
<svg class="r" style="left:212.5px;top:27.5px" width="13" height="10" viewBox="0 0 13 10"><path d="M1.8 2.2 L6.5 6.8 L11.2 2.2" fill="none" stroke="#fff" stroke-width="2.6"/></svg>
<svg class="r" style="left:25.5px;top:23.1px" width="21" height="17" viewBox="0 0 21 17"><path d="M10.5 0.3 C4.7 0.3 0.2 4.9 0.2 10.6 C0.2 12.5 0.7 14.6 1.6 16.2 C1.9 16.7 2.3 16.9 2.8 16.9 H18.2 C18.7 16.9 19.1 16.7 19.4 16.2 C20.3 14.6 20.8 12.5 20.8 10.6 C20.8 4.9 16.3 0.3 10.5 0.3 Z" fill="#fff"/><g fill="#17a2b8"><circle cx="10.5" cy="3.4" r="1.1"/><circle cx="5.6" cy="5.3" r="1.1"/><circle cx="3.5" cy="10.2" r="1.1"/><circle cx="17.5" cy="10.2" r="1.1"/><path d="M13.8 3.6 L11.9 10.9 A2.1 2.1 0 1 1 9.6 10.4 L12.4 3.2 Z"/></g></svg>
<svg class="r" style="left:26.5px;top:66.20px" width="18" height="18" viewBox="0 0 18 18"><circle cx="9" cy="9" r="7.7" fill="none" stroke="#343a40" stroke-width="1.8"/></svg>
<svg class="r" style="left:26.5px;top:109.40px" width="18" height="18" viewBox="0 0 18 18"><circle cx="9" cy="9" r="7.7" fill="none" stroke="#c2c7d0" stroke-width="1.8"/></svg>
<svg class="r" style="left:25.3px;top:155px" width="21" height="15" viewBox="0 0 21 15"><path d="M0.3 2 C0.3 1 1 0.3 2 0.3 H6.6 L8.3 2 H14.2 C15.2 2 15.9 2.7 15.9 3.7 V5.2 H5.3 C4.5 5.2 3.8 5.6 3.4 6.3 L0.3 11.7 Z" fill="#c2c7d0"/><path d="M5.4 6.4 H19.8 C20.5 6.4 20.9 7.1 20.6 7.7 L17.2 13.8 C16.9 14.3 16.4 14.6 15.8 14.6 H1 C0.4 14.6 0 14 0.3 13.4 L3.9 7.2 C4.2 6.7 4.8 6.4 5.4 6.4 Z" fill="#c2c7d0"/></svg>
<svg class="r" style="left:26.5px;top:195.7px" width="19" height="19" viewBox="0 0 19 19"><rect x="1.6" y="0.2" width="7.6" height="3.8" fill="#c2c7d0"/><rect x="4.4" y="3.8" width="2" height="2.4" fill="#c2c7d0"/><path d="M2.4 6 H16.2 L18.6 13.2 V18.6 H0.2 V13.2 Z" fill="#c2c7d0"/><g fill="#343a40"><rect x="4.2" y="8.2" width="1.6" height="1.3"/><rect x="7.2" y="8.2" width="1.6" height="1.3"/><rect x="10.2" y="8.2" width="1.6" height="1.3"/><rect x="13.2" y="8.2" width="1.6" height="1.3"/><rect x="3.8" y="11" width="1.6" height="1.3"/><rect x="6.8" y="11" width="1.6" height="1.3"/><rect x="9.8" y="11" width="1.6" height="1.3"/><rect x="12.8" y="11" width="1.6" height="1.3"/><rect x="6" y="14.6" width="6.6" height="1.3"/></g></svg>
<svg class="r" style="left:27px;top:238.6px" width="18" height="19" viewBox="0 0 18 19"><path d="M9 0.2 L16.8 3.3 C17.4 3.6 17.8 4.1 17.8 4.8 C17.8 12 13.7 16.3 9.6 18.2 C9.2 18.4 8.8 18.4 8.4 18.2 C4.3 16.3 0.2 12 0.2 4.8 C0.2 4.1 0.6 3.6 1.2 3.3 Z" fill="#c2c7d0"/><path d="M9 2.3 L15.7 5 C15.5 11 12.4 14.6 9 16.3 Z" fill="#343a40"/></svg>
<svg class="r" style="left:24px;top:281.6px" width="24" height="19" viewBox="0 0 24 19"><circle cx="8.3" cy="4.9" r="4.8" fill="#c2c7d0"/><path d="M4.2 10.4 H11.6 C12.3 10.4 13 10.5 13.6 10.8 C12.6 11.9 12 13.4 12 15 C12 16.3 12.4 17.6 13.1 18.6 H1.3 C0.6 18.6 0 18 0 17.3 V14.6 C0 12.3 1.9 10.4 4.2 10.4 Z" fill="#c2c7d0"/><circle cx="17.9" cy="13.2" r="6.1" fill="#c2c7d0" stroke="#343a40" stroke-width="1.1"/><path d="M17.9 10.2 V13.4 H20.3" fill="none" stroke="#343a40" stroke-width="1.4"/></svg>
<svg class="r" style="left:26.3px;top:325.6px" width="20" height="19" viewBox="0 0 20 19"><path d="M1.2 2.6 L3 0.6 L5.2 1.6 L11 7.4 L8.8 9.6 L3 3.8 Z" fill="#c2c7d0"/><path d="M10.6 10.6 L12.8 8.4 L18.6 14.2 C19.4 15 19.4 16.2 18.6 17 L17.6 18 C16.8 18.8 15.6 18.8 14.8 18 Z" fill="#c2c7d0"/><path d="M19.2 3.4 L16.4 6.2 L14 5.6 L13.4 3.2 L16.2 0.4 C14 -0.2 11.6 1.2 11.2 3.6 C11.1 4.3 11.2 5 11.4 5.6 L1 16 C0.1 16.9 0.1 18.2 1 19 C1.8 19.8 3.1 19.8 4 19 L14.4 8.6 C15 8.8 15.7 8.9 16.4 8.8 C18.8 8.4 20.2 6 19.6 3.8 Z" fill="#c2c7d0"/><circle cx="2.6" cy="17.4" r="0.9" fill="#343a40"/></svg>
</body></html>
